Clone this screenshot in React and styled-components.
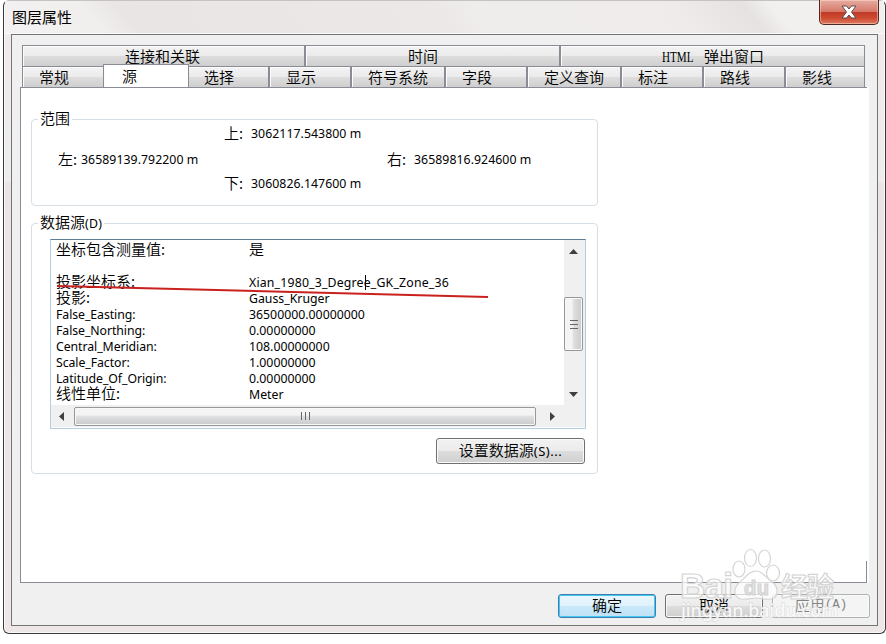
import React, { useState } from "react";
import styled, { createGlobalStyle, css } from "styled-components";

const GlobalStyle = createGlobalStyle`
  * {
    box-sizing: border-box;
  }

  body {
    margin: 0;
    background: #fff;
    color: #000;
    font-family: "Noto Sans CJK SC", sans-serif;
    font-size: 15px;
    font-weight: 350;
    overflow: hidden;
  }
`;

const Desktop = styled.div`
  position: relative;
  width: 886px;
  height: 644px;
  padding-left: 3px;
  background: #fff;
`;

const Window = styled.div`
  width: 883px;
  height: 634px;
  padding: 0 7px;
  border: 1px solid #3a3a3a;
  border-top-color: #c4c2c2;
  border-radius: 6px;
  background: linear-gradient(
    to bottom,
    #f2f0ef 0,
    #eeebea 35px,
    #efedec 180px,
    #ebe4e4 182px,
    #eee7e7 100%
  );
  box-shadow: inset 0 0 0 1px #faf9f9;
`;

const TitleBar = styled.div`
  display: flex;
  justify-content: space-between;
  height: 33px;
  margin: 0 -6px;
  border-bottom: 1px solid #fafafa;
  background: linear-gradient(
    50deg,
    #f3f1f1 0,
    #f1eeee 11%,
    #e8e5e4 15%,
    #e9e6e5 24%,
    #ebe8e7 50%,
    #efecec 54%,
    #eeebea 76%,
    #e5e2e1 84%,
    #f2f0ef 87%
  );
`;

const Title = styled.div`
  padding: 5px 0 0 7px;
  line-height: 22px;
  font-weight: 400;
`;

const CloseButton = styled.button`
  display: flex;
  align-items: center;
  justify-content: center;
  width: 60px;
  height: 25px;
  margin: -1px 5px 0 0;
  padding: 0 0 1px;
  border: 1px solid #4f2722;
  border-top: none;
  border-radius: 0 0 5px 5px;
  background: linear-gradient(
    to bottom,
    #e6aca1 0,
    #d6796b 48%,
    #bf3a26 50%,
    #cd4a30 75%,
    #de7a60 100%
  );
  box-shadow: inset 0 0 0 1px rgba(255, 220, 210, 0.5);
`;

const Client = styled.div`
  width: 867px;
  height: 592px;
  padding: 10px 0 0 8px;
  border: 1px solid #747474;
  background: #f0f0f0;
`;

const TabRow = styled.div`
  display: flex;
  width: 843px;
  height: 21px;
  margin-left: 2px;
`;

const Tab = styled.button`
  flex: none;
  width: ${(props) => props.$width}px;
  height: 21px;
  padding: 0 0 0 ${(props) => props.$indent}px;
  border: solid #898c95;
  border-width: 1px 1px 0 0;
  background: linear-gradient(
    to bottom,
    #f3f3f3 0,
    #ebebeb 48%,
    #dddddd 52%,
    #cfcfcf 100%
  );
  box-shadow: inset 1px 1px 0 #fcfcfc;
  color: #000;
  font: inherit;
  line-height: 18px;
  text-align: left;
  white-space: nowrap;

  &:first-child {
    border-left-width: 1px;
  }

  ${(props) =>
    props.$divider &&
    css`
      border-right-width: 2px;
    `}

  ${(props) =>
    props.$active &&
    css`
      position: relative;
      height: 24px;
      margin: -2px -1px 0;
      padding-bottom: 3px;
      border-width: 1px 1px 0;
      background: #fff;
      line-height: 17px;
    `}
`;

const TabPrefix = styled.span`
  display: inline-block;
  width: 42px;
  font-family: "Liberation Serif", serif;
  font-weight: 400;
  transform: scaleX(0.74);
  transform-origin: left center;
`;

const AccessKey = styled.span`
  font-family: "Liberation Mono", monospace;
  font-size: 12.5px;
  font-weight: 400;
`;

const Page = styled.div`
  position: relative;
  width: 847px;
  height: 496px;
  padding: 31px 0 0 10px;
  border: 1px solid #898c95;
  border-right: none;
  background: #fff;
  box-shadow: 2px 0 0 #fff;
`;

const PageCorner = styled.div`
  position: absolute;
  right: 0;
  bottom: 0;
  width: 1px;
  height: 21px;
  background: #898c95;
`;

const Group = styled.div`
  width: 567px;
  height: ${(props) => props.$height}px;
  margin-bottom: 17px;
  border: 1px solid #d5dfe5;
  border-radius: 4px;
`;

const Legend = styled.div`
  width: max-content;
  height: 18px;
  margin: -11px 0 0 6px;
  padding: 0 2px;
  background: #fff;
  line-height: 17px;
`;

const Latin = styled.span`
  font-family: "Noto Sans", sans-serif;
  font-size: 12.3px;
  font-weight: 400;
  letter-spacing: ${(props) => props.$spacing || 0}px;
`;

const ButtonKey = styled(Latin)`
  font-size: 13px;
  padding-top: 2px;
`;

const ExtentRow = styled.div`
  display: flex;
  height: ${(props) => props.$height}px;
  padding-left: ${(props) => props.$indent}px;
  line-height: ${(props) => props.$height}px;
`;

const ExtentLabel = styled.span`
  width: ${(props) => props.$width}px;
  margin-top: -1px;
  white-space: nowrap;
`;

const ExtentValue = styled(Latin)`
  width: ${(props) => props.$width || 150}px;
  white-space: nowrap;
`;

const ListBox = styled.div`
  position: relative;
  display: grid;
  grid-template: 165px 22px / 513px 21px;
  width: 536px;
  height: 190px;
  margin: 8px 0 0 18px;
  border: 1px solid #b5cfe0;
  border-top-color: #5b7f94;
`;

const Lines = styled.div`
  padding: 1px 0 0 5px;
`;

const Line = styled.div`
  display: grid;
  grid-template-columns: 193px 1fr;
  height: 16px;
  line-height: 16px;
  white-space: nowrap;

  ${Latin} {
    padding-top: 2px;
  }
`;

const Caret = styled.span`
  position: absolute;
  left: 314px;
  top: 35px;
  width: 1px;
  height: 15px;
  background: #000;
`;

const VerticalBar = styled.div`
  display: flex;
  flex-direction: column;
  align-items: center;
  padding: 9px 2px 8px 0;
  background: #f0f0f0;
`;

const HorizontalBar = styled.div`
  display: flex;
  align-items: center;
  padding-left: 8px;
  background: #f0f0f0;
`;

const BarCorner = styled.div`
  background: #f0f0f0;
`;

const Thumb = styled.div`
  display: flex;
  align-items: center;
  justify-content: center;
  border: 1px solid #979797;
  border-radius: 2px;
  box-shadow: inset 0 0 0 1px #f8f8f8;

  ${(props) =>
    props.$vertical
      ? css`
          width: 19px;
          height: 55px;
          margin: 43px 0 41px;
          background: linear-gradient(to right, #f4f4f4 40%, #dddee0 52%, #cbcbcd);
        `
      : css`
          width: 462px;
          height: 19px;
          margin: 0 14px 0 10px;
          background: linear-gradient(to bottom, #f4f4f4 40%, #dddee0 52%, #cbcbcd);
        `}
`;

const PushButton = styled.button`
  display: flex;
  align-items: center;
  justify-content: center;
  width: ${(props) => props.$width}px;
  height: ${(props) => props.$height || 24}px;
  padding: 0 0 3px;
  border: 1px solid #707070;
  border-radius: 3px;
  background: linear-gradient(
    to bottom,
    #f2f2f2 0,
    #ebebeb 48%,
    #dddddd 52%,
    #cfcfcf 100%
  );
  box-shadow: inset 0 0 0 1px #fafafa;
  color: #000;
  font: inherit;

  ${(props) =>
    props.$primary &&
    css`
      border-color: #3c7fb1;
      background: linear-gradient(
        to bottom,
        #eaf6fd 0,
        #dff2fc 48%,
        #c9e9fb 52%,
        #bfe1f4 100%
      );
      box-shadow: inset 0 0 0 1px #45c8ef;
    `}

  ${(props) =>
    props.disabled &&
    css`
      border-color: #adb2b5;
      background: #f4f4f4;
      color: #838383;
    `}
`;

const SourceAction = styled.div`
  display: flex;
  justify-content: flex-end;
  padding: 9px 12px 0 0;
`;

const Footer = styled.div`
  display: flex;
  justify-content: flex-end;
  gap: 9px;
  padding: 11px 7px 0 0;
`;

const Annotation = styled.svg`
  position: absolute;
  left: 0;
  top: 0;
  pointer-events: none;
`;

const upperTabs = [
  { label: "连接和关联", width: 284, indent: 102 },
  { label: "时间", width: 255, indent: 102 },
  { label: "弹出窗口", width: 304, indent: 101, prefix: "HTML" },
];

const lowerTabs = [
  { label: "常规", width: 82, indent: 16 },
  { label: "源", width: 86, indent: 18 },
  { label: "选择", width: 82, indent: 16 },
  { label: "显示", width: 82, indent: 16 },
  { label: "符号系统", width: 94, indent: 16 },
  { label: "字段", width: 82, indent: 16 },
  { label: "定义查询", width: 94, indent: 16 },
  { label: "标注", width: 82, indent: 16 },
  { label: "路线", width: 82, indent: 16 },
  { label: "影线", width: 79, indent: 16 },
];

const sourceLines = [
  { name: "坐标包含测量值", value: "是", cjk: true },
  { name: "", value: "" },
  { name: "投影坐标系", value: "Xian_1980_3_Degree_GK_Zone_36", cjk: true },
  { name: "投影", value: "Gauss_Kruger", cjk: true },
  { name: "False_Easting:", value: "36500000.00000000" },
  { name: "False_Northing:", value: "0.00000000" },
  { name: "Central_Meridian:", value: "108.00000000" },
  { name: "Scale_Factor:", value: "1.00000000" },
  { name: "Latitude_Of_Origin:", value: "0.00000000" },
  { name: "线性单位", value: "Meter", cjk: true },
];

const Arrow = ({ direction }) => {
  const points = {
    up: "0,5 4.5,0 9,5",
    down: "0,0 9,0 4.5,5",
    left: "5,0 5,9 0,4.5",
    right: "0,0 5,4.5 0,9",
  };
  const vertical = direction === "up" || direction === "down";
  return (
    <svg width={vertical ? 9 : 5} height={vertical ? 5 : 9}>
      <polygon points={points[direction]} fill="#404040" />
    </svg>
  );
};

const Grip = ({ vertical }) => (
  <svg width="10" height="10">
    <path
      d={vertical ? "M1 1.5h8M1 5.5h8M1 9.5h8" : "M1.5 1v8M5.5 1v8M9.5 1v8"}
      stroke="#65666a"
    />
  </svg>
);

const Watermark = () => (
  <Annotation width="886" height="644" viewBox="0 0 886 644">
    <g fill="#fff" fillOpacity="0.7" stroke="#d4d4d4" strokeWidth="1.2">
      <ellipse cx="739" cy="569" rx="6" ry="8" />
      <ellipse cx="750.5" cy="558" rx="6" ry="8.5" />
      <ellipse cx="764.5" cy="558.5" rx="6" ry="8.5" />
      <ellipse cx="773" cy="573" rx="6.5" ry="8" />
      <path d="M756 571c-7 0-10 6-16 11-7 6-7 15 1 17 6 1 10-1 15-1s10 2 15 1c8-2 8-12 1-17-7-5-9-11-16-11z" />
      <g fontFamily="Liberation Sans, sans-serif" fontWeight="700">
        <text x="680" y="598" fontSize="35" textLength="53">
          Bai
        </text>
        <text x="744" y="595" fontSize="20" textLength="25" fill="#d8d8d8">
          du
        </text>
      </g>
      <text
        x="781"
        y="597"
        fontFamily="Noto Sans CJK SC, sans-serif"
        fontSize="27"
        fontWeight="700"
        textLength="53"
      >
        经验
      </text>
    </g>
    <text
      x="681"
      y="617"
      fontFamily="Noto Sans, sans-serif"
      fontSize="18"
      fontWeight="500"
      textLength="157"
      fill="#fff"
      fillOpacity="0.85"
      stroke="#c8c8c8"
      strokeWidth="1.4"
      paintOrder="stroke"
      strokeOpacity="0.5"
    >
      jingyan.baidu.com
    </text>
  </Annotation>
);

const App = () => {
  const [activeTab, setActiveTab] = useState("源");

  return (
    <>
      <GlobalStyle />
      <Desktop>
        <Window>
          <TitleBar>
            <Title>图层属性</Title>
            <CloseButton aria-label="关闭">
              <svg width="16" height="14" viewBox="0 0 16 14">
                <path
                  d="M1 1h4.500L8 4l2.500-3H15l-4.500 6 4.500 6h-4.500L8 10l-2.500 3H1l4.500-6z"
                  fill="#fff"
                  stroke="#5c4a4c"
                />
              </svg>
            </CloseButton>
          </TitleBar>
          <Client>
            <TabRow>
              {upperTabs.map((tab) => (
                <Tab
                  key={tab.label}
                  $width={tab.width}
                  $indent={tab.indent}
                  $divider={tab.label !== "弹出窗口"}
                >
                  {tab.prefix && <TabPrefix>{tab.prefix}</TabPrefix>}
                  {tab.label}
                </Tab>
              ))}
            </TabRow>
            <TabRow>
              {lowerTabs.map((tab) => (
                <Tab
                  key={tab.label}
                  $width={tab.width}
                  $indent={tab.indent}
                  $divider={!["常规", "源", "影线"].includes(tab.label)}
                  $active={tab.label === activeTab}
                  onClick={() => setActiveTab(tab.label)}
                >
                  {tab.label}
                </Tab>
              ))}
            </TabRow>
            <Page>
              <Group $height={87}>
                <Legend>范围</Legend>
                <ExtentRow $height={14} $indent={192}>
                  <ExtentLabel $width={27}>上:</ExtentLabel>
                  <ExtentValue $spacing={0.05}>3062117.543800 m</ExtentValue>
                </ExtentRow>
                <ExtentRow $height={37} $indent={26}>
                  <ExtentLabel $width={23}>左:</ExtentLabel>
                  <ExtentValue $spacing={0.05} $width={306}>
                    36589139.792200 m
                  </ExtentValue>
                  <ExtentLabel $width={27}>右:</ExtentLabel>
                  <ExtentValue $spacing={0.05}>36589816.924600 m</ExtentValue>
                </ExtentRow>
                <ExtentRow $height={12} $indent={192}>
                  <ExtentLabel $width={27}>下:</ExtentLabel>
                  <ExtentValue $spacing={0.05}>3060826.147600 m</ExtentValue>
                </ExtentRow>
              </Group>
              <Group $height={251}>
                <Legend>
                  数据源<Latin $spacing={0.3}>(D)</Latin>
                </Legend>
                <ListBox>
                  <Lines>
                    {sourceLines.map((line, index) => (
                      <Line key={index}>
                        {line.cjk ? (
                          <span>{line.name}:</span>
                        ) : (
                          <Latin $spacing={-0.07}>{line.name}</Latin>
                        )}
                        {line.value === "是" ? (
                          <span>{line.value}</span>
                        ) : (
                          <Latin $spacing={line.value.length > 20 ? 0.18 : 0}>
                            {line.value}
                          </Latin>
                        )}
                      </Line>
                    ))}
                  </Lines>
                  <VerticalBar>
                    <Arrow direction="up" />
                    <Thumb $vertical>
                      <Grip vertical />
                    </Thumb>
                    <Arrow direction="down" />
                  </VerticalBar>
                  <HorizontalBar>
                    <Arrow direction="left" />
                    <Thumb>
                      <Grip />
                    </Thumb>
                    <Arrow direction="right" />
                  </HorizontalBar>
                  <BarCorner />
                  <Caret />
                  <Annotation width="450" height="70">
                    <path
                      d="M6 46L437 57"
                      stroke="#c9211e"
                      strokeWidth="2"
                      fill="none"
                    />
                  </Annotation>
                </ListBox>
                <SourceAction>
                  <PushButton $width={149} $height={26}>
                    设置数据源<ButtonKey $spacing={0.5}>(S)...</ButtonKey>
                  </PushButton>
                </SourceAction>
              </Group>
              <PageCorner />
            </Page>
            <Footer>
              <PushButton $width={98} $primary>
                确定
              </PushButton>
              <PushButton $width={98}>取消</PushButton>
              <PushButton $width={98} disabled>
                应用<AccessKey>(A)</AccessKey>
              </PushButton>
            </Footer>
          </Client>
        </Window>
        <Watermark />
      </Desktop>
    </>
  );
};

export default App;
